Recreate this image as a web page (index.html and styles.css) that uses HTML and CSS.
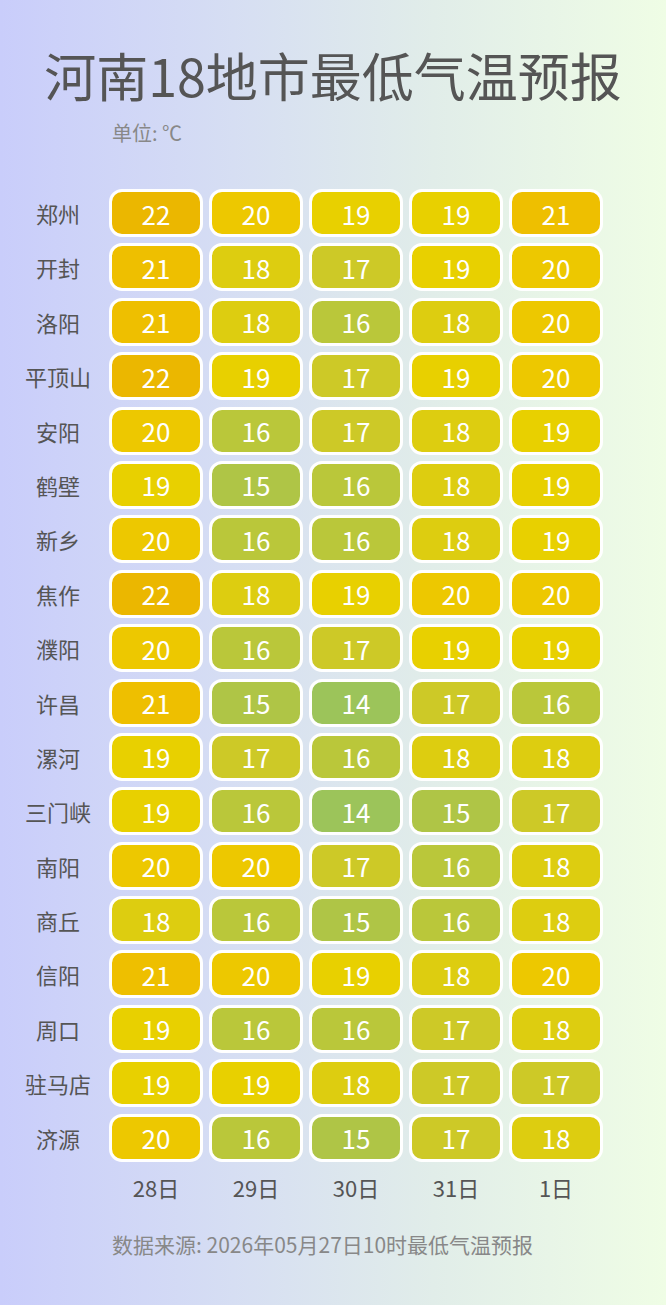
FILE: index.html
```html
<!DOCTYPE html>
<html lang="zh">
<head>
<meta charset="utf-8">
<link rel="stylesheet" href="styles.css">
</head>
<body>
<div class="page">
  <h1 class="title">河南18地市最低气温预报</h1>
  <div class="unit">单位: ℃</div>
  <div class="grid" id="grid"></div>
  <div class="dates">
    <span>28日</span><span>29日</span><span>30日</span><span>31日</span><span>1日</span>
  </div>
  <div class="source">数据来源: 2026年05月27日10时最低气温预报</div>
</div>
<script src="app.js"></script>
</body>
</html>
```
FILE: app.js
```js
const data = [
  ["郑州",[22,20,19,19,21]],
  ["开封",[21,18,17,19,20]],
  ["洛阳",[21,18,16,18,20]],
  ["平顶山",[22,19,17,19,20]],
  ["安阳",[20,16,17,18,19]],
  ["鹤壁",[19,15,16,18,19]],
  ["新乡",[20,16,16,18,19]],
  ["焦作",[22,18,19,20,20]],
  ["濮阳",[20,16,17,19,19]],
  ["许昌",[21,15,14,17,16]],
  ["漯河",[19,17,16,18,18]],
  ["三门峡",[19,16,14,15,17]],
  ["南阳",[20,20,17,16,18]],
  ["商丘",[18,16,15,16,18]],
  ["信阳",[21,20,19,18,20]],
  ["周口",[19,16,16,17,18]],
  ["驻马店",[19,19,18,17,17]],
  ["济源",[20,16,15,17,18]]
];
const colors = {
  14:"#9cc45a",15:"#afc546",16:"#bac73a",17:"#cdc927",18:"#ddcd10",
  19:"#e8d000",20:"#edc800",21:"#eebf00",22:"#ebb700"
};
const grid = document.getElementById("grid");
for (const [name, vals] of data) {
  const l = document.createElement("div");
  l.className = "label";
  l.textContent = name;
  grid.appendChild(l);
  for (const v of vals) {
    const c = document.createElement("div");
    c.className = "cell";
    c.style.background = colors[v];
    c.textContent = v;
    grid.appendChild(c);
  }
}
```
FILE: styles.css
```css
html, body {
  margin: 0;
  padding: 0;
}
body {
  width: 666px;
  height: 1305px;
  background: linear-gradient(to right, #c9cdfb 0%, #d6def3 35%, #e1ede9 65%, #effde5 100%);
  font-family: "Noto Sans CJK SC", "Noto Sans", sans-serif;
  overflow: hidden;
}
.page {
  display: flex;
  flex-direction: column;
}
.title {
  margin: 43px 0 0 0;
  text-align: center;
  font-size: 52px;
  font-weight: 400;
  line-height: 64px;
  color: #555555;
}
.unit {
  margin: 14px 0 0 112px;
  font-size: 20px;
  line-height: 24px;
  color: #888888;
}
.grid {
  margin-top: 44px;
  padding-left: 13px;
  display: grid;
  grid-template-columns: 90px repeat(5, 94px);
  grid-auto-rows: 48px;
  column-gap: 6px;
  row-gap: 6.4px;
}
.label {
  display: flex;
  align-items: center;
  justify-content: center;
  font-size: 22px;
  color: #555555;
}
.cell {
  box-sizing: border-box;
  border: 3px solid #ffffff;
  border-radius: 13px;
  display: flex;
  align-items: center;
  justify-content: center;
  color: #ffffff;
  font-size: 26px;
}
.dates {
  margin-top: 10px;
  padding-left: 109px;
  display: grid;
  grid-template-columns: repeat(5, 94px);
  column-gap: 6px;
  font-size: 22px;
  line-height: 30px;
  color: #555555;
  text-align: center;
}
.source {
  margin: 28px 0 0 112px;
  font-size: 21px;
  line-height: 28px;
  color: #888888;
}
```
